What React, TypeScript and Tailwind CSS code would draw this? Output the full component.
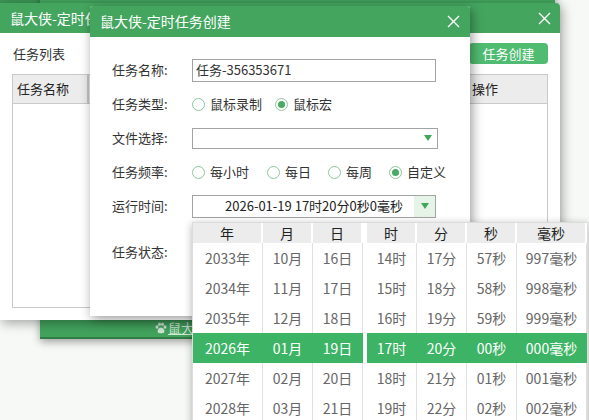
import { type ReactNode } from 'react';

const CloseIcon = () => (
  <svg width="13" height="13" viewBox="0 0 13 13" className="shrink-0">
    <path d="M1 1 L12 12 M12 1 L1 12" stroke="#ffffff" strokeWidth="1.4" fill="none" />
  </svg>
);

const Caret = () => (
  <svg width="10" height="8" viewBox="0 0 10 8">
    <path d="M1 1 H9 L5 7 Z" fill="#3ca75b" />
  </svg>
);

const Paw = () => (
  <svg width="12" height="12" viewBox="0 0 12 12">
    <g fill="#cfe6d5">
      <ellipse cx="2" cy="5" rx="1.5" ry="1.8" />
      <ellipse cx="4.5" cy="2.2" rx="1.5" ry="1.8" />
      <ellipse cx="7.5" cy="2.2" rx="1.5" ry="1.8" />
      <ellipse cx="10" cy="5" rx="1.5" ry="1.8" />
      <path d="M6 5.5 C3.5 5.5 2 8.5 2.8 10.2 C3.5 11.5 8.5 11.5 9.2 10.2 C10 8.5 8.5 5.5 6 5.5 Z" />
    </g>
  </svg>
);

const Radio = ({ checked, children, className }: { checked?: boolean; children: ReactNode; className?: string }) => (
  <span className={`flex items-center ${className ?? ''}`}>
    <span className="flex h-[13px] w-[13px] items-center justify-center rounded-full border border-[#8cc79c] bg-white">
      {checked && <span className="h-[7px] w-[7px] rounded-full bg-[#47ab63]" />}
    </span>
    <span className="ml-[5px]">{children}</span>
  </span>
);

const Row = ({ label, children, className }: { label: string; children?: ReactNode; className?: string }) => (
  <div className={`flex h-[34px] items-center ${className ?? ''}`}>
    <span className="w-[80px] shrink-0">{label}</span>
    {children}
  </div>
);

type Col = { title: string; w: string; values: string[] };

const dateCols: Col[] = [
  { title: '年', w: 'w-[70px]', values: ['2033年', '2034年', '2035年', '2026年', '2027年', '2028年'] },
  { title: '月', w: 'w-[50px]', values: ['10月', '11月', '12月', '01月', '02月', '03月'] },
  { title: '日', w: 'w-[50px]', values: ['16日', '17日', '18日', '19日', '20日', '21日'] },
];

const timeCols: Col[] = [
  { title: '时', w: 'w-[50px]', values: ['14时', '15时', '16时', '17时', '18时', '19时'] },
  { title: '分', w: 'w-[50px]', values: ['17分', '18分', '19分', '20分', '21分', '22分'] },
  { title: '秒', w: 'w-[50px]', values: ['57秒', '58秒', '59秒', '00秒', '01秒', '02秒'] },
  { title: '毫秒', w: 'w-[70px]', values: ['997毫秒', '998毫秒', '999毫秒', '000毫秒', '001毫秒', '002毫秒'] },
];

const SELECTED = 3;

const Panel = ({ cols }: { cols: Col[] }) => (
  <div className="flex flex-col">
    <div className="flex h-[20px]">
      {cols.map((c) => (
        <div
          key={c.title}
          className={`${c.w} flex items-center justify-center border-r-2 border-white bg-[#ececec] text-[#222]`}
        >
          {c.title}
        </div>
      ))}
    </div>
    {[0, 1, 2, 3, 4, 5].map((r) => (
      <div key={r} className={`flex h-[30px] ${r === SELECTED ? 'bg-[#3db465] text-white' : 'text-[#666]'}`}>
        {cols.map((c) => (
          <div
            key={c.title}
            className={`${c.w} flex items-center justify-center border-r ${
              r === SELECTED ? 'border-[#3db465]' : 'border-[#e0e0e0]'
            }`}
          >
            {c.values[r]}
          </div>
        ))}
      </div>
    ))}
  </div>
);

export default function App() {
  return (
    <div className="relative h-[420px] w-[589px] overflow-hidden bg-[#f7f9f6] font-['Noto_Sans_CJK_SC','Noto_Sans',sans-serif] text-[13px] text-[#333]">
      {/* window peeking at the top */}
      <div className="absolute left-0 top-[-20px] flex h-[24px] w-[555px] items-end bg-[#3b9454] pl-[320px]">
        <span className="mb-[1px] h-[3px] w-[30px] bg-[#e0862a]" />
      </div>

      {/* main app window behind, only its bottom bar shows */}
      <div className="absolute left-[40px] top-[-30px] flex h-[369px] w-[515px] flex-col justify-end border-b-2 border-[#2f7d45] bg-[#42a35d] shadow-[0_3px_8px_rgba(0,0,0,0.35)]">
        <div className="flex h-[18px] items-center pl-[115px] text-[13px] text-[#d4ead9]">
          <Paw />
          <span className="ml-[1px] underline">鼠大侠</span>
        </div>
      </div>

      {/* task list window */}
      <div className="absolute left-0 top-[3px] flex h-[317px] w-[560px] flex-col overflow-hidden rounded-tr-[4px] bg-white shadow-[2px_3px_12px_rgba(0,0,0,0.35)]">
        <div className="flex h-[30px] shrink-0 items-center justify-between bg-[#44a55f] pl-[10px] pr-[9px] text-[14px] text-white">
          <span className="w-[80px] overflow-hidden whitespace-nowrap">鼠大侠-定时任务</span>
          <CloseIcon />
        </div>
        <div className="flex flex-1 flex-col px-3 pb-3">
          <div className="flex h-[41px] items-center justify-between">
            <span className="pl-[1px]">任务列表</span>
            <button className="h-[21px] w-[79px] rounded-[4px] bg-[#50bc71] text-[13px] text-white">任务创建</button>
          </div>
          <div className="flex flex-1 flex-col border border-[#c9c9c9]">
            <div className="flex h-[29px] shrink-0 items-center border-b border-[#c9c9c9] bg-[#ececec] text-[#222]">
              <span className="flex h-full w-[76px] items-center border-r-2 border-[#c4c4c4] pl-[4px]">任务名称</span>
              <span className="flex-1" />
              <span className="flex h-full w-[80px] items-center border-l border-[#c9c9c9] pl-[4px]">操作</span>
            </div>
          </div>
        </div>
      </div>

      {/* create task dialog */}
      <div className="absolute left-[90px] top-[6px] flex h-[310px] w-[380px] flex-col overflow-hidden rounded-t-[3px] bg-white shadow-[2px_3px_12px_rgba(0,0,0,0.4)]">
        <div className="flex h-[31px] shrink-0 items-center justify-between bg-[#44a55f] pl-[10px] pr-[10px] text-[14px] text-white">
          <span>鼠大侠-定时任务创建</span>
          <CloseIcon />
        </div>
        <div className="flex flex-col pl-[22px] pt-[16px]">
          <Row label="任务名称:">
            <div className="flex h-[23px] w-[244px] items-center border border-[#a3a3a3] px-[3px]">任务-356353671</div>
          </Row>
          <Row label="任务类型:">
            <Radio className="mr-[13px]">鼠标录制</Radio>
            <Radio checked>鼠标宏</Radio>
          </Row>
          <Row label="文件选择:">
            <div className="flex h-[21px] w-[246px] items-center justify-end border border-[#a3a3a3] pr-[4px]">
              <Caret />
            </div>
          </Row>
          <Row label="任务频率:">
            <Radio className="mr-[18px]">每小时</Radio>
            <Radio className="mr-[17px]">每日</Radio>
            <Radio className="mr-[17px]">每周</Radio>
            <Radio checked>自定义</Radio>
          </Row>
          <Row label="运行时间:">
            <div className="flex h-[23px] w-[244px] items-center border border-[#a3a3a3] pl-[21px]">
              <span className="flex-1 text-center text-[#222]">2026-01-19 17时20分0秒0毫秒</span>
              <span className="flex h-full w-[21px] items-center justify-center bg-[#e6f4e8]">
                <Caret />
              </span>
            </div>
          </Row>
          <Row label="任务状态:" className="mt-[12px]" />
        </div>
      </div>

      {/* date time picker dropdown */}
      <div className="absolute left-[192px] top-[222px] flex h-[210px] w-[396px] border-l border-r border-t border-[#dcdcdc] bg-white shadow-[0_2px_8px_rgba(0,0,0,0.3)] text-[14px]">
        <Panel cols={dateCols} />
        <div className="w-[5px]" />
        <Panel cols={timeCols} />
      </div>
    </div>
  );
}
